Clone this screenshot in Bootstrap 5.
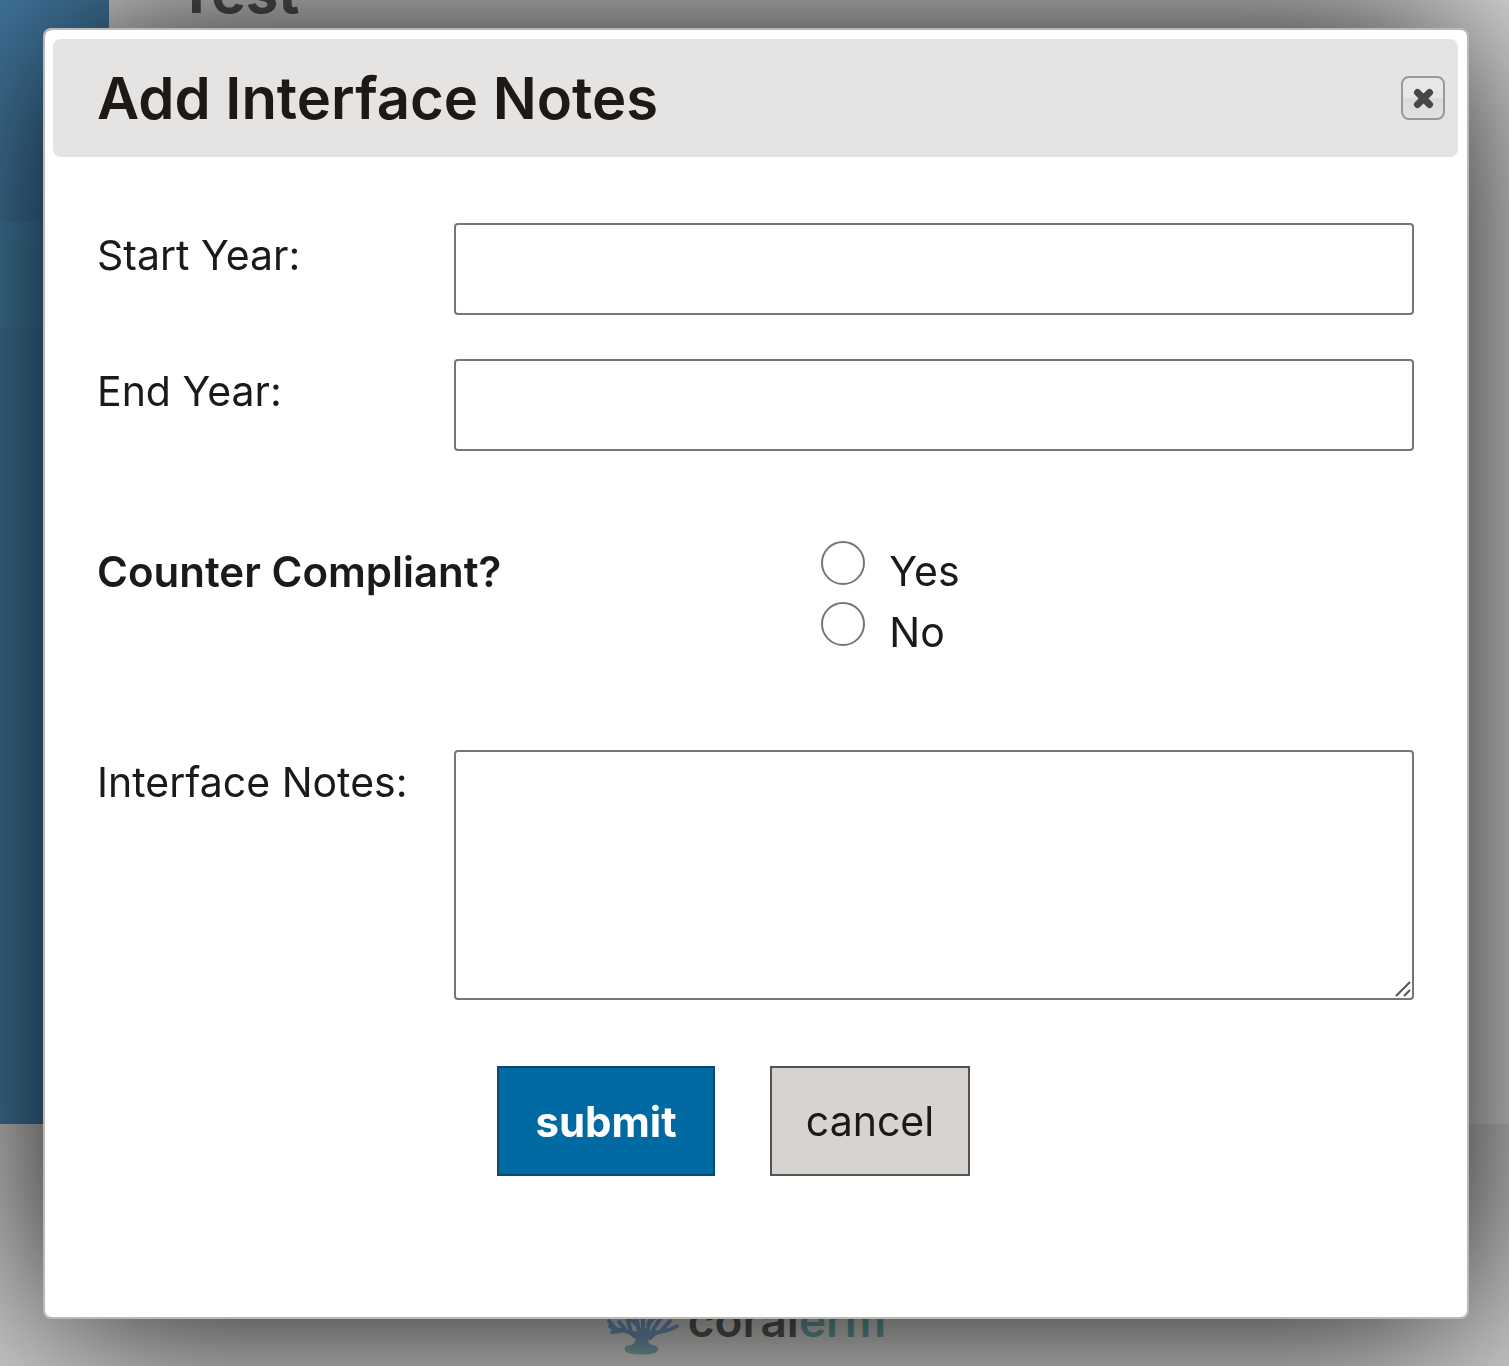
<!DOCTYPE html>
<html lang="en">
<head>
<meta charset="utf-8">
<meta name="viewport" content="width=device-width, initial-scale=1">
<title>Add Interface Notes</title>
<link href="https://cdn.jsdelivr.net/npm/bootstrap@5.3.0/dist/css/bootstrap.min.css" rel="stylesheet">
<style>
  body { font-family: Inter, "Liberation Sans", sans-serif; font-size: 41px; line-height: 61px; color: #1c1917; background: #d0d0ce; overflow: hidden; }
  .app-shell { height: 1124px; background: #e0e0e0; }
  .side-rail { flex: 0 0 109px; padding-top: 222px; background: #457ea8; }
  .side-link { display: block; height: 105px; background: #4686ae; }
  .page-title { margin: -48px 0 0 68px; font-size: 58px; line-height: 80px; color: #5a5856; }
  .site-footer { padding: 166px 17px 0 0; }
  .brand-name { font-size: 46px; line-height: 60px; color: #565656; }
  .brand-name span { color: #669ea1; }

  .notes-dialog { max-width: none; margin: 28px 40px 0 43px; }
  .notes-content { border: 2px solid #bbb8b5; border-radius: 8px; padding: 9px 9px 0 8px; box-shadow: 0 0 190px #000; color: inherit; }
  .notes-header { height: 118px; padding: 0 13px 0 44px; background: #e5e4e2; border-radius: 8px; }
  .notes-title { font-size: 58px; line-height: 80px; }
  .close-btn { width: 44px; height: 44px; border: 2px solid #999; border-radius: 8px; background: linear-gradient(#e7e7e7 50%, #dbdbdb 50%, #e2e2e2); }
  .notes-form { padding: 66px 44px 141px 44px; }
  .label-col { flex: 0 0 357px; line-height: 64px; }
  .box-field { border: 2px solid #767676; border-radius: 4px; padding: 4px 12px; font-size: 41px; }
  .line-field { height: 92px; }
  .area-field { height: 250px; resize: none; }
  .field-gap { margin-bottom: 44px; }
  .section-gap { margin-bottom: 90px; }
  .choice-gap { margin-bottom: 87px; }
  .area-gap { margin-bottom: 66px; }
  .choice-label { flex: 0 0 55%; font-size: 42px; }
  .choice-radio { appearance: none; width: 44px; height: 44px; margin: 0; border: 2px solid #767676; border-radius: 50%; background: #fff; }
  .choice-radio:checked { background: radial-gradient(#026aa2 50%, #fff 52%); }
  .grip { right: 2px; bottom: 2px; pointer-events: none; }
  .action-row { padding-left: 400px; gap: 55px; }
  .action-btn { height: 110px; min-width: 200px; padding: 0 24px; border: 2px solid #57534e; border-radius: 0; font-size: 41px; background: #d6d3d0; color: #1c1917; }
  .action-main { min-width: 218px; font-size: 42px; background: #026aa2; border-color: #0b4a6f; color: #fff; }
</style>
</head>
<body>
<div class="app-shell d-flex">
  <nav class="side-rail" aria-label="Main"><a class="side-link" href="#" aria-label="Current section"></a></nav>
  <main class="flex-grow-1"><h1 class="page-title fw-bold">Test</h1></main>
</div>
<footer class="site-footer d-flex justify-content-center gap-2">
  <svg width="74" height="66" viewBox="0 0 74 66" fill="none" stroke="url(#reef)" stroke-width="4" stroke-linecap="round" aria-hidden="true">
    <defs><linearGradient id="reef" gradientUnits="userSpaceOnUse" x1="0" y1="28" x2="0" y2="64"><stop offset="0" stop-color="#7097c8"/><stop offset=".6" stop-color="#7295b5"/><stop offset="1" stop-color="#78aaa6"/></linearGradient></defs>
    <path d="M28 46C22 38 14 43 4 36M15 41L6 42M19 39L13 32M9 38L3 31M25 42L20 24M34 46L29 22M37 46V18M40 46L46 22M44 48C52 38 60 44 71 36M54 42L64 31M47 40L56 26M30 34L23 28M42 34L48 28"/>
    <path fill="url(#reef)" stroke="none" d="M24 40C31 46 31 53 25 55C17 55 17 61 22 63C30 65 43 65 49 63C54 60 53 56 46 55C40 53 41 48 51 40L42 41L37 36L32 42Z"/>
  </svg>
  <div class="brand-name fw-semibold">coral<span>erm</span></div>
</footer>

<div class="modal d-block" tabindex="-1" role="dialog" aria-modal="true" aria-labelledby="notesTitle">
  <div class="modal-dialog notes-dialog">
    <div class="modal-content notes-content">
      <div class="notes-header d-flex align-items-center justify-content-between">
        <h2 class="notes-title fw-semibold m-0" id="notesTitle">Add Interface Notes</h2>
        <button type="button" class="close-btn d-flex align-items-center justify-content-center p-0" aria-label="Close">
          <svg width="24" height="24" viewBox="0 0 24 24" aria-hidden="true"><path d="M6 6L18 18M18 6L6 18" transform="translate(.5 .5)" stroke="#484848" stroke-width="7" stroke-linecap="round"/></svg>
        </button>
      </div>
      <form class="notes-form">
        <div class="d-flex field-gap">
          <label class="label-col" for="startYear">Start Year:</label>
          <input class="form-control box-field line-field" id="startYear" type="text">
        </div>
        <div class="d-flex section-gap">
          <label class="label-col" for="endYear">End Year:</label>
          <input class="form-control box-field line-field" id="endYear" type="text">
        </div>
        <div class="d-flex choice-gap" role="radiogroup" aria-labelledby="counterLabel">
          <div class="choice-label fw-semibold" id="counterLabel">Counter Compliant?</div>
          <div>
            <div class="d-flex gap-4"><input class="choice-radio" type="radio" name="counter" id="counterYes"><label for="counterYes">Yes</label></div>
            <div class="d-flex gap-4"><input class="choice-radio" type="radio" name="counter" id="counterNo"><label for="counterNo">No</label></div>
          </div>
        </div>
        <div class="d-flex area-gap">
          <label class="label-col" for="notesText">Interface Notes:</label>
          <div class="position-relative flex-grow-1">
            <textarea class="form-control box-field area-field" id="notesText"></textarea>
            <svg class="grip position-absolute" width="18" height="18" viewBox="0 0 18 18" stroke="#555" stroke-width="2" aria-hidden="true"><path d="M2 16L16 2M10 16L16 10"/></svg>
          </div>
        </div>
        <div class="action-row d-flex">
          <button type="submit" class="action-btn action-main fw-bold">submit</button>
          <button type="button" class="action-btn">cancel</button>
        </div>
      </form>
    </div>
  </div>
</div>
<script src="https://cdn.jsdelivr.net/npm/bootstrap@5.3.0/dist/js/bootstrap.bundle.min.js"></script>
</body>
</html>
